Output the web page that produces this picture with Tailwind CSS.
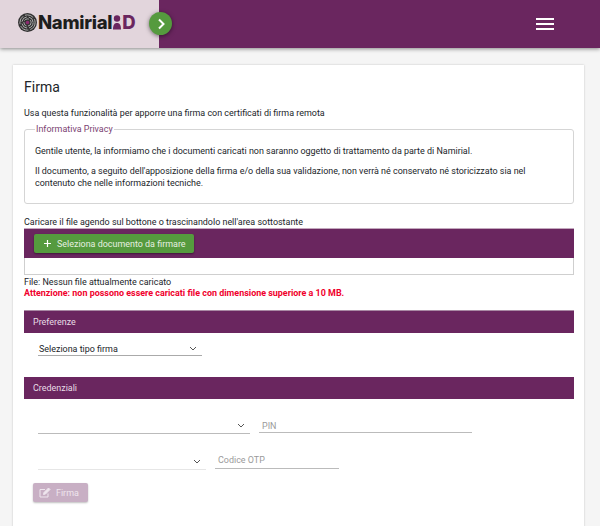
<!DOCTYPE html>
<html lang="it">
<head>
    <meta charset="UTF-8">
    <title>Firma</title>
    <script src="https://cdn.jsdelivr.net/npm/@tailwindcss/browser@4"></script>
</head>
<body class="bg-[#f5f5f5] h-[526px] w-[600px] overflow-hidden font-['Roboto',sans-serif] text-[#212529] text-[8.95px] leading-[12px]">
    <!-- Header -->
    <header class="relative h-[48px] bg-[#6a265f] shadow-[0_1px_4px_rgba(0,0,0,0.45)] flex justify-between items-center">
        <div class="w-[159px] h-[48px] bg-[#e2d5dc] flex items-center pl-[18px] pb-[4px]">
            <svg width="19" height="19" viewBox="0 0 19 19" class="shrink-0">
                <circle cx="9.5" cy="9.5" r="9.5" fill="#333"/>
                <circle cx="9.5" cy="9.5" r="7.6" fill="none" stroke="#ddd" stroke-width="0.7" stroke-dasharray="9 2"/>
                <circle cx="9.5" cy="9.5" r="5.6" fill="none" stroke="#ddd" stroke-width="0.7" stroke-dasharray="7 2"/>
                <circle cx="9.5" cy="9.5" r="3.6" fill="none" stroke="#ddd" stroke-width="0.7" stroke-dasharray="5 1.5"/>
                <circle cx="9.5" cy="9.5" r="1.8" fill="#8c2a70"/>
            </svg>
            <span class="ml-px font-['Inter',sans-serif] font-extrabold text-[#1e1e1e] text-[18.5px] leading-none tracking-[-0.3px]">Namirial</span>
            <svg width="8" height="15" viewBox="0 0 8 15" class="shrink-0 ml-px">
                <circle cx="4" cy="3.5" r="3.2" fill="#6a265f"/>
                <path d="M0 14.5 C0 9 2 8 4 8 C6 8 8 9 8 14.5 Z" fill="#6a265f"/>
            </svg>
            <span class="ml-px font-['Inter',sans-serif] font-extrabold text-[#6a265f] text-[18.5px] leading-none">D</span>
        </div>
        <button class="absolute left-[149px] top-[12px] w-[23px] h-[23px] rounded-full bg-[#559a3e] shadow-[0_1px_4px_rgba(0,0,0,0.5)] flex items-center justify-center">
            <svg width="10" height="12" viewBox="0 0 10 12" fill="none" stroke="#fff" stroke-width="2"><path d="M3 1.5 L7.5 6 L3 10.5"/></svg>
        </button>
        <div class="mr-[46px] w-[18px] flex flex-col gap-[3px]">
            <div class="h-[2px] bg-white"></div>
            <div class="h-[2px] bg-white"></div>
            <div class="h-[2px] bg-white"></div>
        </div>
    </header>

    <!-- Card -->
    <main class="mt-[17px] ml-[13px] w-[571px] h-[470px] bg-white shadow-[0_0_2px_rgba(0,0,0,0.2)] pt-[14px] pl-[11px] pr-[10px]">
        <h1 class="text-[14px] leading-[17px] text-[#212529]">Firma</h1>
        <p class="mt-[11px]">Usa questa funzionalità per apporre una firma con certificati di firma remota</p>

        <fieldset class="mt-[4px] border border-[#d5d5d5] rounded-[3px] px-[10px] h-[81px]">
            <legend class="px-px text-[#7b3f72] leading-[12px]">Informativa Privacy</legend>
            <p class="mt-[10px]">Gentile utente, la informiamo che i documenti caricati non saranno oggetto di trattamento da parte di Namirial.</p>
            <p class="mt-[8px]">Il documento, a seguito dell'apposizione della firma e/o della sua validazione, non verrà né conservato né storicizzato sia nel contenuto che nelle informazioni tecniche.</p>
        </fieldset>

        <p class="mt-[12px]">Caricare il file agendo sul bottone o trascinandolo nell'area sottostante</p>
        <div class="h-[30px] bg-[#6a265f] border-t border-[#c3a8be] pl-[10px] pt-[5px]">
            <button class="h-[19px] w-[160px] rounded-[2px] bg-[#559a3e] shadow-[0_1px_2px_rgba(0,0,0,0.4)] text-[#e6efe0] flex items-center pl-[9px] gap-[5px] whitespace-nowrap">
                <svg width="9" height="9" viewBox="0 0 9 9" stroke="#fff" stroke-width="1.2"><path d="M4.5 1 V8 M1 4.5 H8"/></svg>
                <span>Seleziona documento da firmare</span>
            </button>
        </div>
        <div class="h-[17px] border border-t-0 border-[#cfcfcf] bg-white"></div>
        <p class="mt-px">File: Nessun file attualmente caricato</p>
        <p class="-mt-px font-bold text-[#f0002c]">Attenzione: non possono essere caricati file con dimensione superiore a 10 MB.</p>

        <div class="mt-[11px] h-[23px] bg-[#6a265f] border-t border-[#a98aa4] text-[#e8dde6] pl-[9px] flex items-center">Preferenze</div>
        <div class="mt-[9px] ml-[14px] w-[164px] h-[14px] border-b border-[#aaa] flex justify-between items-center pl-px pr-[5px]">
            <span>Seleziona tipo firma</span>
            <svg width="8" height="5" viewBox="0 0 8 5" fill="none" stroke="#555" stroke-width="1"><path d="M1 1 L4 4 L7 1"/></svg>
        </div>

        <div class="mt-[21px] h-[22px] bg-[#6a265f] text-[#e8dde6] pl-[9px] flex items-center">Credenziali</div>
        <div class="mt-[20px] ml-[14px] flex items-end gap-[9px]">
            <div class="w-[212px] h-[15px] pb-px border-b border-[#bbb] flex justify-end items-center pr-[5px]">
                <svg width="8" height="5" viewBox="0 0 8 5" fill="none" stroke="#555" stroke-width="1"><path d="M1 1 L4 4 L7 1"/></svg>
            </div>
            <div class="w-[213px] h-[14px] pt-px mb-px border-b border-[#bbb] pl-[3px] text-[#9a9a9a]">PIN</div>
        </div>
        <div class="mt-[20px] ml-[14px] flex items-end gap-[9px]">
            <div class="w-[168px] h-[15px] pb-px border-b border-[#e6e6e6] flex justify-end items-center pr-[5px]">
                <svg width="8" height="5" viewBox="0 0 8 5" fill="none" stroke="#555" stroke-width="1"><path d="M1 1 L4 4 L7 1"/></svg>
            </div>
            <div class="w-[124px] h-[15px] mb-px border-b border-[#bbb] pl-[3px] text-[#9a9a9a]">Codice OTP</div>
        </div>
        <button class="mt-[13px] ml-[9px] w-[55px] h-[19px] rounded-[2px] bg-[#c8afc4] shadow-[0_1px_2px_rgba(0,0,0,0.25)] text-[#efe6ee] flex items-center pl-[6px] gap-[5px]">
            <svg width="12" height="11" viewBox="0 0 12 11" fill="none" stroke="#efe6ee" stroke-width="1"><path d="M9 6.5 V10 H1 V2.5 H6"/><path d="M4.5 7.5 L5 5.5 L9.5 1 L11 2.5 L6.5 7 Z" fill="#efe6ee"/></svg>
            <span>Firma</span>
        </button>
    </main>
</body>
</html>
